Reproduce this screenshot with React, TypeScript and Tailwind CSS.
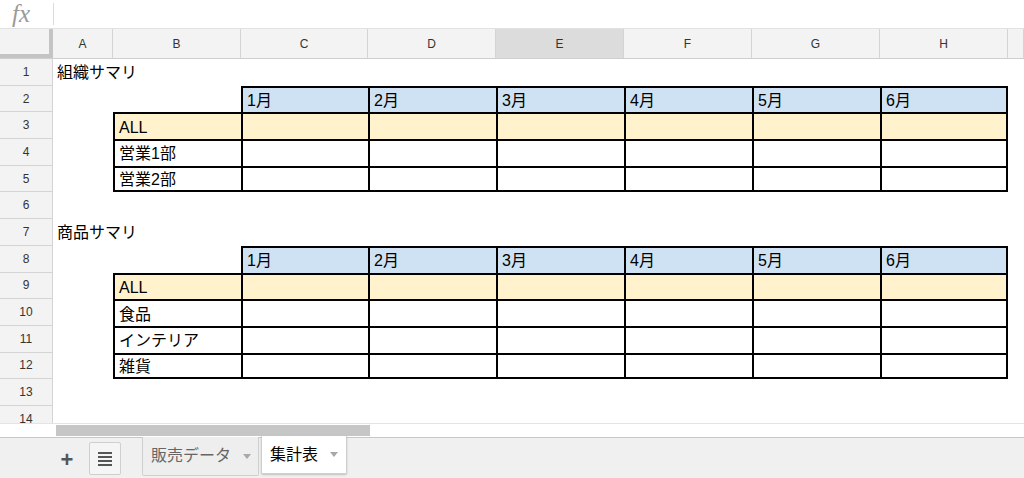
import React from 'react';

const FONT = { fontFamily: '"Liberation Sans", "Noto Sans CJK JP", sans-serif' };

const COLS = ['A', 'B', 'C', 'D', 'E', 'F', 'G', 'H', ''];
const WIDTHS = ['w-[60px]', 'w-[128px]', 'w-[127px]', 'w-[128px]', 'w-[128px]', 'w-[128px]', 'w-[128px]', 'w-[128px]', 'flex-1'];
const MONTHS = ['1月', '2月', '3月', '4月', '5月', '6月'];

type Block = { top: number; title: string; items: string[] };

const blocks: Block[] = [
  { top: 2, title: '組織サマリ', items: ['ALL', '営業1部', '営業2部'] },
  { top: 8, title: '商品サマリ', items: ['ALL', '食品', 'インテリア', '雑貨'] },
];

function cellFor(row: number, col: number) {
  // returns [className, text]
  for (const b of blocks) {
    if (row === b.top - 1 && col === 0) return ['', b.title];
    if (row === b.top && col >= 2 && col <= 7) {
      const cls =
        'bg-[#cfe2f3] border-t-2 border-l-2 border-black' + (col === 7 ? ' border-r-2' : '');
      return [cls, MONTHS[col - 2]];
    }
    const last = b.top + b.items.length;
    if (row > b.top && row <= last && col >= 1 && col <= 7) {
      const idx = row - b.top - 1;
      let cls = 'border-t-2 border-l-2 border-black';
      if (col === 7) cls += ' border-r-2';
      if (row === last) cls += ' border-b-2';
      if (idx === 0) cls += ' bg-[#fff2cc]';
      return [cls, col === 1 ? b.items[idx] : ''];
    }
  }
  return ['', ''];
}

function SheetRow({ row }: { row: number }) {
  return (
    <div className="flex h-[26.7px]">
      <div className="w-[53px] shrink-0 bg-[#f3f3f3] border-r border-b border-[#d4d4d4] flex items-center justify-center text-[12px] text-[#333]">
        {row}
      </div>
      {COLS.map((c, i) => {
        const [cls, text] = cellFor(row, i);
        return (
          <div
            key={c + i}
            className={`${WIDTHS[i]} shrink-0 flex items-center pl-[4px] pt-[2px] text-[16px] text-black whitespace-nowrap ${cls}`}
          >
            {text}
          </div>
        );
      })}
    </div>
  );
}

function Caret() {
  return (
    <svg width="8" height="5" viewBox="0 0 8 5" className="ml-3">
      <path d="M0 0h8L4 5z" fill="#a8a8a8" />
    </svg>
  );
}

export default function App() {
  const rows = Array.from({ length: 14 }, (_, i) => i + 1);
  return (
    <div className="w-[1024px] h-[478px] overflow-hidden bg-white flex flex-col" style={FONT}>
      {/* formula bar */}
      <div className="h-[29px] shrink-0 flex items-center border-b border-[#e2e2e2]">
        <div className="w-[54px] flex items-center justify-between pl-[12px]">
          <span className="text-[25px] italic text-[#9a9a9a] leading-[26px]" style={{ fontFamily: '"Liberation Serif", serif' }}>
            fx
          </span>
          <div className="w-px h-[22px] bg-[#dcdcdc]" />
        </div>
      </div>

      {/* column headers */}
      <div className="h-[30px] shrink-0 flex bg-[#f3f3f3] border-b border-[#cfcfcf]">
        <div className="w-[53px] shrink-0 border-r-[4px] border-b-[4px] border-[#c4c4c4]" />
        {COLS.map((c, i) => (
          <div
            key={c + i}
            className={`${WIDTHS[i]} shrink-0 flex items-center justify-center text-[12px] text-[#333] border-r border-[#d4d4d4] ${c === 'E' ? 'bg-[#dcdcdc]' : ''}`}
          >
            {c}
          </div>
        ))}
      </div>

      {/* grid body */}
      <div className="h-[364px] shrink-0 overflow-hidden">
        {rows.map((r) => (
          <SheetRow key={r} row={r} />
        ))}
      </div>

      {/* horizontal scrollbar */}
      <div className="h-[14px] shrink-0 flex border-t border-[#e4e4e4]">
        <div className="w-[53px] bg-white" />
        <div className="flex-1 flex items-center pl-[3px]">
          <div className="w-[314px] h-[11px] bg-[#c6c6c6]" />
        </div>
      </div>

      {/* sheet tabs */}
      <div className="flex-1 flex items-start bg-[#f0f0f0] border-t border-[#c8c8c8]">
        <div className="w-[140px] flex items-end h-full pb-[3px]">
          <div className="ml-[59px] w-[16px] h-[30px] flex items-center justify-center text-[22px] text-[#555] font-bold leading-none">
            +
          </div>
          <div className="ml-[14px] w-[32px] h-[33px] border border-[#cfcfcf] bg-[#f5f5f5] rounded-[2px] flex flex-col items-center justify-center gap-[2px]">
            <div className="w-[14px] h-[2px] bg-[#555]" />
            <div className="w-[14px] h-[2px] bg-[#555]" />
            <div className="w-[14px] h-[2px] bg-[#555]" />
            <div className="w-[14px] h-[2px] bg-[#555]" />
          </div>
        </div>
        <div className="ml-[2px] mt-[-1px] w-[117px] h-[39px] border border-[#cfcfcf] border-t-0 bg-[#eeeeee] rounded-b-[2px] flex items-center pl-[8px] text-[16px] text-[#666]">
          販売データ
          <Caret />
        </div>
        <div className="ml-[2px] mt-[-2px] w-[86px] h-[38px] bg-white border border-[#cfcfcf] border-t-0 rounded-b-[2px] shadow-[0_1px_2px_rgba(0,0,0,0.2)] flex items-center pl-[8px] text-[16px] text-black">
          集計表
          <Caret />
        </div>
      </div>
    </div>
  );
}
